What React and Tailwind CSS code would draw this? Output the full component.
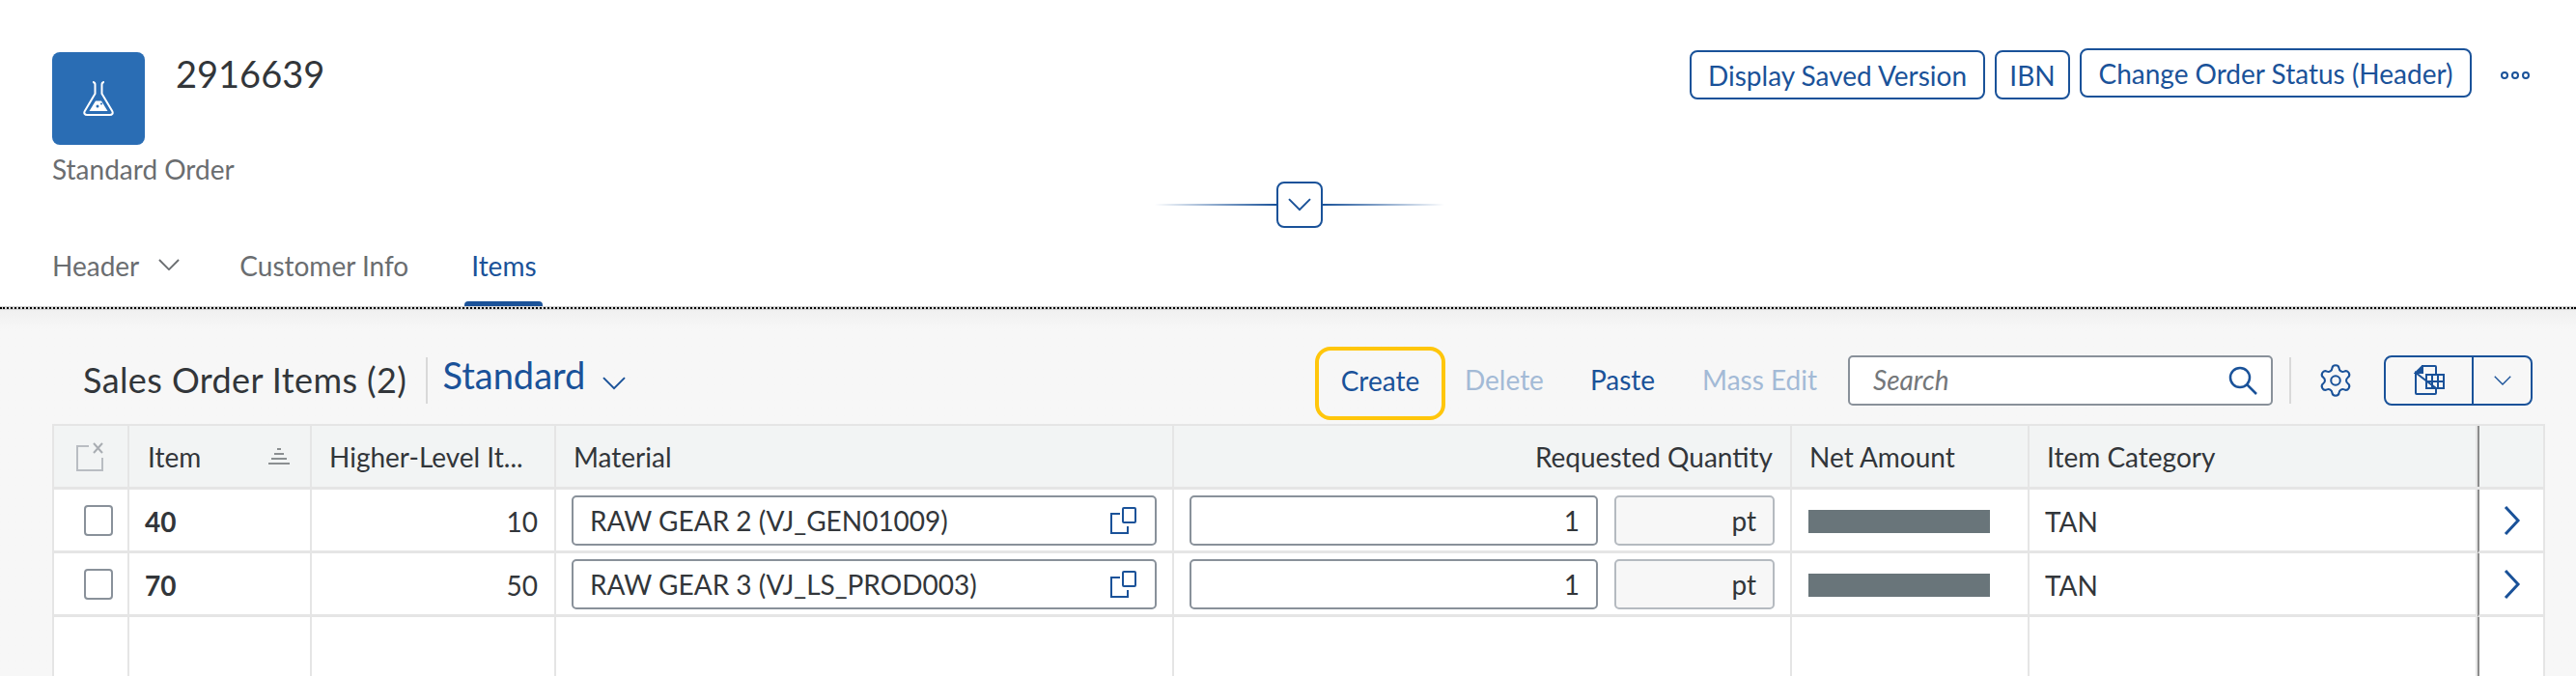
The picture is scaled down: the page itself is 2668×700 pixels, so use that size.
import React from 'react';
import { Settings } from 'lucide-react';

const BLUE = '#1a5299';
const COLS = 'grid grid-cols-[78px_189px_253px_640px_640px_246px_464px_70px]';

function Flask() {
  return (
    <svg width="32" height="36" viewBox="0 0 32 36" fill="none" stroke="white">
      <path d="M10 1c1.500 0 2.500 1 2.500 2.500V13L1.800 31c-1.300 2.300 0 4 2.500 4h23.400c2.500 0 3.800-1.700 2.500-4L19.500 13V3.500C19.500 2 20.500 1 22 1" strokeWidth="2" />
      <path d="M6.500 31l6.500-10.500h6L25.500 31z" fill="white" stroke="none" />
      <circle cx="15" cy="26" r="1.500" fill="#2a6db4" stroke="none" />
      <circle cx="19" cy="23.500" r="1" fill="#2a6db4" stroke="none" />
    </svg>
  );
}

function Chevron({ width = 24, color = BLUE, strokeWidth = 2 }) {
  return (
    <svg width={width} height={width * 0.55} viewBox="0 0 24 13" fill="none" stroke={color} strokeWidth={strokeWidth}>
      <path d="M1 1l11 11L23 1" />
    </svg>
  );
}

function OutlineButton({ children, className = '' }) {
  return (
    <button className={`h-[51px] whitespace-nowrap rounded-[8px] border-2 border-[#1a5299] text-[28px] leading-none text-[#1a5299] ${className}`}>
      {children}
    </button>
  );
}

function HeaderCell({ children, className = '' }) {
  return (
    <div className={`flex items-center border-r-2 border-[#e5e5e5] text-[28px] text-[#32363a] ${className}`}>{children}</div>
  );
}

function Cell({ children, className = '' }) {
  return (
    <div className={`flex h-[66px] items-center border-b-[3px] border-r-2 border-[#e5e5e5] text-[28px] text-[#32363a] ${className}`}>{children}</div>
  );
}

function ValueHelp() {
  return (
    <svg width="29" height="28" viewBox="0 0 29 28" fill="none" stroke={BLUE} strokeWidth="2">
      <rect x="14" y="1" width="13" height="15" rx="1" />
      <path d="M11 7H2v20h17v-7" />
    </svg>
  );
}

function Row({ id, parent, material }) {
  return (
    <div className={COLS}>
      <Cell className="pl-[31px]">
        <span className="h-[32px] w-[30px] rounded-[4px] border-2 border-[#89919a] bg-white" />
      </Cell>
      <Cell className="pl-[16px] pt-[2px] font-bold">{id}</Cell>
      <Cell className="justify-end pr-[17px] pt-[2px]">{parent}</Cell>
      <Cell className="pl-[16px] pr-[16px]">
        <div className="flex h-[52px] w-full items-center justify-between rounded-[5px] border-2 border-[#89919a] pl-[17px] pr-[18px]">
          <span>{material}</span>
          <ValueHelp />
        </div>
      </Cell>
      <Cell className="gap-[17px] pl-[16px] pr-[16px]">
        <div className="flex h-[52px] w-[423px] items-center justify-end rounded-[5px] border-2 border-[#89919a] pr-[17px]">1</div>
        <div className="flex h-[52px] flex-1 items-center justify-end rounded-[5px] border-2 border-[#b5bac0] bg-[#f7f7f7] pr-[17px]">pt</div>
      </Cell>
      <Cell className="pl-[17px] pt-[2px]">
        <div className="h-[24px] w-[188px] bg-[#69757a]" />
      </Cell>
      <Cell className="pl-[16px] pt-[2px]">TAN</Cell>
      <Cell className="border-l-2 border-r-0 border-l-[#8c8c8c]">
        <svg className="ml-[25px]" width="18" height="30" viewBox="0 0 18 30" fill="none" stroke={BLUE} strokeWidth="3">
          <path d="M2 1l13 14L2 29" />
        </svg>
      </Cell>
    </div>
  );
}

export default function App() {
  return (
    <div className="flex h-[700px] w-full flex-col overflow-hidden bg-white font-['Lato',sans-serif]">
      {/* Object page header */}
      <header className="h-[317px] shrink-0 px-[54px] pt-[54px]">
        <div className="flex justify-between">
          <div className="flex">
            <div className="flex h-[96px] w-[96px] items-center justify-center rounded-[8px] bg-[#2a6db4]">
              <Flask />
            </div>
            <h1 className="ml-[32px] mt-[-2px] text-[38px] leading-[48px] text-[#32363a]">2916639</h1>
          </div>
          <div className="mr-[-6px] mt-[-2px] flex items-start gap-[10px]">
            <OutlineButton className="w-[306px]">Display Saved Version</OutlineButton>
            <OutlineButton className="w-[78px]">IBN</OutlineButton>
            <OutlineButton className="mt-[-2px] w-[406px]">Change Order Status (Header)</OutlineButton>
            <div className="ml-[20px] flex h-[51px] items-center gap-[3px]">
              <span className="h-[8px] w-[8px] rounded-full border-2 border-[#1a5299]" />
              <span className="h-[8px] w-[8px] rounded-full border-2 border-[#1a5299]" />
              <span className="h-[8px] w-[8px] rounded-full border-2 border-[#1a5299]" />
            </div>
          </div>
        </div>
        <p className="mt-[7px] text-[28px] leading-[36px] text-[#6a6d70]">Standard Order</p>

        <div className="ml-[1142px] mt-[-5px] flex w-[300px] items-center">
          <div className="h-[2px] flex-1 bg-gradient-to-r from-transparent to-[#1a5299]" />
          <button className="flex h-[48px] w-[48px] items-center justify-center rounded-[8px] border-2 border-[#1a5299]">
            <Chevron />
          </button>
          <div className="h-[2px] flex-1 bg-gradient-to-l from-transparent to-[#1a5299]" />
        </div>

        <nav className="mt-[21px] flex text-[28px] leading-[36px] text-[#6a6d70]">
          <span>Header</span>
          <span className="ml-[20px] mt-[11px]"><Chevron width={22} color="#6a6d70" /></span>
          <span className="ml-[62px]">Customer Info</span>
          <span className="relative ml-[65px] text-[#1a5299]">
            Items
            <span className="absolute bottom-[-24px] left-[-7px] right-[-6px] h-[5px] rounded-t-[4px] bg-[#1a5299]" />
          </span>
        </nav>
      </header>

      <div className="h-[4px] shrink-0 bg-[#d4d4d4] pt-[1px]">
        <div className="border-t-2 border-dotted border-black" />
      </div>

      {/* Items section */}
      <main className="flex min-h-0 flex-1 flex-col bg-[#f7f7f7] bg-gradient-to-b from-[#f0f0f0] to-[#f7f7f7] to-[20px] px-[32px]">
        <div className="ml-[54px] flex h-[118px] shrink-0 items-center pr-[13px] pt-[28px]">
          <span className="mt-[-3px] text-[36px] tracking-[0.4px] text-[#32363a]">Sales Order Items (2)</span>
          <span className="ml-[20px] h-[48px] w-[2px] bg-[#d9d9d9]" />
          <span className="ml-[15px] mt-[-12px] text-[38px] text-[#1a5299]">Standard</span>
          <span className="ml-[18px] mt-[6px]"><Chevron width={24} /></span>

          <button className="ml-auto mt-[6px] flex h-[76px] w-[135px] items-center justify-center rounded-[16px] border-[4px] border-[#ffc60b] pb-[6px] text-[28px] text-[#1a5299]">Create</button>
          <span className="ml-[20px] mt-[-2px] text-[28px] text-[#a3bad6]">Delete</span>
          <span className="ml-[48px] mt-[-2px] text-[28px] text-[#1a5299]">Paste</span>
          <span className="ml-[49px] mt-[-2px] text-[28px] text-[#a3bad6]">Mass Edit</span>
          <div className="ml-[32px] flex h-[52px] w-[440px] items-center justify-between rounded-[5px] border-2 border-[#89919a] bg-white pl-[24px] pr-[14px] text-[28px] italic text-[#74777a]">
            <span className="mt-[-2px]">Search</span>
            <svg width="30" height="30" viewBox="0 0 30 30" fill="none" stroke={BLUE} strokeWidth="2.500">
              <circle cx="12" cy="12" r="10" />
              <path d="M19 19l10 10" />
            </svg>
          </div>
          <span className="ml-[17px] h-[48px] w-[2px] bg-[#d9d9d9]" />
          <Settings className="ml-[27px]" size={38} strokeWidth={1.3} color={BLUE} />
          <div className="ml-[31px] flex h-[52px] w-[154px] rounded-[8px] border-2 border-[#1a5299]">
            <div className="flex w-[91px] items-center justify-center border-r-2 border-[#1a5299]">
              <svg width="32" height="32" viewBox="0 0 32 32" fill="none" stroke={BLUE} strokeWidth="2">
                <path d="M8 1h14a1 1 0 0 1 1 1v8M23 24v5a1 1 0 0 1-1 1H3a1 1 0 0 1-1-1V8z" />
                <path d="M9 1v7H2z" fill={BLUE} />
                <path d="M13 10h18v14H13zM19 10v14M25 10v14M13 17h18" />
              </svg>
            </div>
            <div className="flex flex-1 items-center justify-center">
              <Chevron width={18} strokeWidth={1.8} />
            </div>
          </div>
        </div>

        {/* Table */}
        <div className="ml-[22px] flex min-h-0 w-[2582px] flex-1 flex-col border-x-2 border-t-2 border-[#e5e5e5] bg-white">
          <div className={`${COLS} h-[66px] shrink-0 border-b-[3px] border-[#e5e5e5] bg-[#f2f4f4]`}>
            <HeaderCell className="pl-[22px]">
              <svg width="30" height="30" viewBox="0 0 30 30" fill="none" stroke="#b9bdc2" strokeWidth="2">
                <path d="M14 4H2v25h26V16" />
                <path d="M19 1l9 10M28 1l-9 10" stroke="#a9adb2" />
              </svg>
            </HeaderCell>
            <HeaderCell className="justify-between pl-[19px] pr-[20px]">
              Item
              <svg width="24" height="18" viewBox="0 0 24 18" fill="none" stroke="#6a6d70" strokeWidth="1.500">
                <path d="M10 1h4M7 6h10M4 11h16M1 16h22" />
              </svg>
            </HeaderCell>
            <HeaderCell className="pl-[18px]">Higher-Level It...</HeaderCell>
            <HeaderCell className="pl-[18px]">Material</HeaderCell>
            <HeaderCell className="justify-end pr-[18px]">Requested Quantity</HeaderCell>
            <HeaderCell className="pl-[18px]">Net Amount</HeaderCell>
            <HeaderCell className="pl-[18px]">Item Category</HeaderCell>
            <HeaderCell className="border-l-2 border-r-0 border-l-[#8c8c8c]" />
          </div>
          <Row id="40" parent="10" material="RAW GEAR 2 (VJ_GEN01009)" />
          <Row id="70" parent="50" material="RAW GEAR 3 (VJ_LS_PROD003)" />
          <div className={`${COLS} flex-1`}>
            <div className="border-r-2 border-[#e5e5e5]" />
            <div className="border-r-2 border-[#e5e5e5]" />
            <div className="border-r-2 border-[#e5e5e5]" />
            <div className="border-r-2 border-[#e5e5e5]" />
            <div className="border-r-2 border-[#e5e5e5]" />
            <div className="border-r-2 border-[#e5e5e5]" />
            <div className="border-r-2 border-[#e5e5e5]" />
            <div className="border-l-2 border-[#8c8c8c]" />
          </div>
        </div>
      </main>
    </div>
  );
}
